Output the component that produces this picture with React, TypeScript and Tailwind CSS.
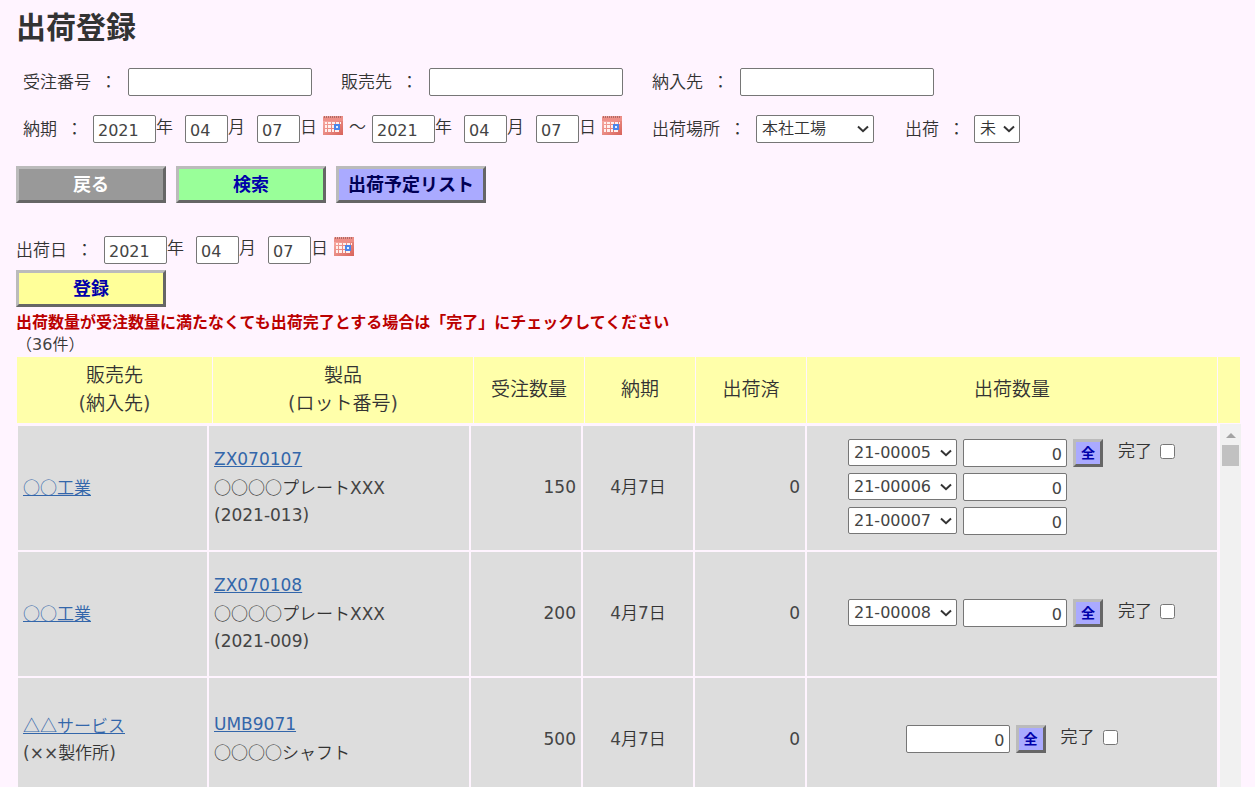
import { useState, type ReactNode } from "react";

type Lot = { no?: string };

const rows: {
  customer: string;
  deliverTo?: string;
  code: string;
  product: string;
  lotNo?: string;
  ordered: number;
  due: string;
  shipped: number;
  lots: Lot[];
}[] = [
  {
    customer: "○○工業",
    code: "ZX070107",
    product: "○○○○プレートXXX",
    lotNo: "(2021-013)",
    ordered: 150,
    due: "4月7日",
    shipped: 0,
    lots: [{ no: "21-00005" }, { no: "21-00006" }, { no: "21-00007" }],
  },
  {
    customer: "○○工業",
    code: "ZX070108",
    product: "○○○○プレートXXX",
    lotNo: "(2021-009)",
    ordered: 200,
    due: "4月7日",
    shipped: 0,
    lots: [{ no: "21-00008" }],
  },
  {
    customer: "△△サービス",
    deliverTo: "(××製作所)",
    code: "UMB9071",
    product: "○○○○シャフト",
    ordered: 500,
    due: "4月7日",
    shipped: 0,
    lots: [{}],
  },
];

const field = "h-7 rounded-[2px] border border-[#767676] bg-white px-1 pt-[3px] text-[16px] font-normal text-[#444]";
const bevel = "border-3 border-t-[#bbb] border-r-[#666] border-b-[#666] border-l-[#bbb] font-bold";
const bigButton = "h-[37px] w-[150px] shrink-0 text-[18px] leading-none";

function CalendarIcon() {
  return (
    <svg width="20" height="19" viewBox="0 0 20 19" shapeRendering="crispEdges">
      <defs>
        <linearGradient id="cal" x1="0" y1="0" x2="1" y2="1">
          <stop offset="0" stopColor="#fbb4ad" />
          <stop offset="1" stopColor="#d8625a" />
        </linearGradient>
      </defs>
      <rect x="0" y="0" width="20" height="19" fill="url(#cal)" />
      <rect x="0" y="1" width="20" height="4" fill="#ee8f88" />
      <path
        d="M1 0h1v2h-1zM3 0h1v2h-1zM5 0h1v2h-1zM7 0h1v2h-1zM9 0h1v2h-1zM11 0h1v2h-1zM13 0h1v2h-1zM15 0h1v2h-1zM17 0h1v2h-1z"
        fill="#b06a66"
      />
      <path
        d="M2 6h2v2h-2zM5 6h3v2h-3zM9 6h3v2h-3zM13 6h3v2h-3zM17 6h1v2h-1zM2 9h2v3h-2zM5 9h3v3h-3zM9 9h2v3h-2zM2 13h2v3h-2zM5 13h3v3h-3zM9 13h2v3h-2zM12 14h4v2h-4z"
        fill="#fff0ee"
      />
      <rect x="11" y="8" width="6" height="6" fill="#4a86ea" />
      <rect x="13" y="10" width="2" height="2" fill="#e4f0ff" />
    </svg>
  );
}

function Label({ htmlFor, className, children }: { htmlFor?: string; className: string; children: ReactNode }) {
  return (
    <label htmlFor={htmlFor} className={`flex shrink-0 items-center gap-[9px] leading-6 ${className}`}>
      <span>{children}</span>
      <span>：</span>
    </label>
  );
}

function Select({ id, label, options, className }: { id?: string; label?: string; options: string[]; className: string }) {
  return (
    <div className="relative">
      <select
        id={id}
        aria-label={label}
        className={`block appearance-none rounded-[2px] border border-[#767676] bg-white pl-[5px] text-[16px] leading-6 ${className}`}
      >
        {options.map((option) => (
          <option key={option}>{option}</option>
        ))}
      </select>
      <svg
        width="12"
        height="8"
        viewBox="0 0 12 8"
        className="pointer-events-none absolute top-1/2 right-[5px] -translate-y-1/2"
      >
        <path d="M1 1.5L6 6.2L11 1.5" fill="none" stroke="#333" strokeWidth="2" />
      </svg>
    </div>
  );
}

// Japanese runs are light, latin runs regular; the placeholder marks
// need the full-width glyphs of the Japanese font
function Text({ text }: { text: string }) {
  return text.split(/([○△]+|[ -~×]+)/).map((part, i) => {
    if (i % 2 === 0) return part;
    return (
      <span key={i} className={/[○△]/.test(part) ? "font-['Noto_Sans_CJK_JP',sans-serif]" : "font-normal text-[#444]"}>
        {part}
      </span>
    );
  });
}

function DateInput({ label }: { label: string }) {
  return (
    <div className="flex items-center leading-6">
      <input aria-label={`${label} 年`} defaultValue="2021" className={`${field} w-[63px]`} />
      <span className="mr-3 mb-1">年</span>
      <input aria-label={`${label} 月`} defaultValue="04" className={`${field} w-[43px]`} />
      <span className="mr-3 mb-1">月</span>
      <input aria-label={`${label} 日`} defaultValue="07" className={`${field} w-[43px]`} />
      <span className="mb-1">日</span>
      <button type="button" aria-label="カレンダー" className="mb-2 ml-[6px]">
        <CalendarIcon />
      </button>
    </div>
  );
}

function ShipCell({ lots, code }: { lots: Lot[]; code: string }) {
  const [done, setDone] = useState(false);

  return (
    <div className="flex items-start justify-center">
      <div className="flex flex-col gap-[6px]">
        {lots.map((lot, i) => (
          <div key={i} className="flex items-start gap-[6px]">
            {lot.no && <Select label={`${code} ロット`} options={[lot.no]} className="h-[27px] w-[109px] font-normal text-[#444]" />}
            <input
              aria-label={`${code} 出荷数量`}
              defaultValue="0"
              className={`${field} w-[104px] text-right`}
            />
          </div>
        ))}
      </div>
      <button type="button" className={`${bevel} ml-[6px] h-7 w-[30px] bg-[#aaaaff] text-[14px] leading-none text-[#0000aa]`}>
        全
      </button>
      <label className="mr-px ml-[15px] flex h-6 items-center gap-2">
        完了
        <input
          type="checkbox"
          checked={done}
          onChange={() => setDone(!done)}
          className="size-[15px]"
        />
      </label>
    </div>
  );
}

export default function App() {
  return (
    <main className="flex h-screen flex-col overflow-hidden bg-[#fff4ff] pr-[14px] pl-4 font-['DejaVu_Sans','Noto_Sans_CJK_JP',sans-serif] text-[17px] leading-[27px] font-[350] text-[#333]">
      <h1 className="pt-2 text-[30px] leading-10 font-bold">出荷登録</h1>

      <form className="mt-5 ml-[7px] grid grid-cols-[318px_311px_1fr] gap-y-[19px]">
        <div className="flex items-center">
          <Label htmlFor="order" className="w-[105px]">受注番号</Label>
          <input id="order" className={`${field} w-[184px]`} />
        </div>
        <div className="flex items-center">
          <Label htmlFor="customer" className="w-[88px]">販売先</Label>
          <input id="customer" className={`${field} w-[194px]`} />
        </div>
        <div className="flex items-center">
          <Label htmlFor="deliver" className="w-[88px]">納入先</Label>
          <input id="deliver" className={`${field} w-[194px]`} />
        </div>
        <div className="col-span-2 flex items-center">
          <Label className="w-[70px]">納期</Label>
          <DateInput label="納期開始" />
          <span className="mx-[6px] mb-1 leading-6">～</span>
          <DateInput label="納期終了" />
        </div>
        <div className="flex items-center">
          <Label htmlFor="place" className="w-[104px]">出荷場所</Label>
          <Select id="place" options={["本社工場"]} className="h-7 w-[118px]" />
          <Label htmlFor="status" className="ml-[31px] w-[69px]">出荷</Label>
          <Select id="status" options={["未", "済"]} className="h-7 w-[46px]" />
        </div>
      </form>

      <div className="mt-[23px] flex gap-[10px]">
        <button type="button" className={`${bevel} ${bigButton} bg-[#999] text-white`}>戻る</button>
        <button type="button" className={`${bevel} ${bigButton} bg-[#99ff99] text-[#0000aa]`}>検索</button>
        <button type="button" className={`${bevel} ${bigButton} bg-[#aaaaff] text-[#000055]`}>出荷予定リスト</button>
      </div>

      <div className="mt-[33px] flex items-center">
        <Label className="w-[88px]">出荷日</Label>
        <DateInput label="出荷日" />
      </div>
      <button type="button" className={`${bevel} ${bigButton} mt-[6px] bg-[#ffff99] text-[#0000aa]`}>登録</button>

      <p className="mt-[5px] text-[16px] leading-[22px] font-bold text-[#bb0000]">
        出荷数量が受注数量に満たなくても出荷完了とする場合は「完了」にチェックしてください
      </p>
      <p className="text-[16px] leading-[22px]"><Text text="（36件）" /></p>

      <table className="w-full shrink-0 table-fixed border-separate border-spacing-px text-[19px] leading-7">
        <thead>
          <tr className="h-[66px] *:bg-[#ffffaa] *:p-0 *:pb-[2px] *:font-[350]">
            <th className="w-[195px]">販売先<br /><Text text="(納入先)" /></th>
            <th className="w-[260px]">製品<br /><Text text="(ロット番号)" /></th>
            <th className="w-[110px]">受注数量</th>
            <th className="w-[110px]">納期</th>
            <th className="w-[110px]">出荷済</th>
            <th>出荷数量</th>
            <th className="w-[22px]"></th>
          </tr>
        </thead>
      </table>

      <div className="flex min-h-0 flex-1 gap-px overflow-hidden">
        <div className="min-w-0 flex-1">
          <table className="w-full table-fixed border-separate border-spacing-[2px]">
            <tbody>
              {rows.map((row) => (
                <tr key={row.code} className="h-[124px] *:bg-[#ddd] *:px-[5px] *:pt-0 *:pb-[2px]">
                  <td className="w-[189px]">
                    <a href="#customer" className="text-[#3366aa] underline"><Text text={row.customer} /></a>
                    {row.deliverTo && <div><Text text={row.deliverTo} /></div>}
                  </td>
                  <td className="w-[260px]">
                    <a href="#product" className="font-normal text-[#3366aa] underline">{row.code}</a>
                    <div><Text text={row.product} /></div>
                    {row.lotNo && <div><Text text={row.lotNo} /></div>}
                  </td>
                  <td className="w-[110px] text-right"><Text text={String(row.ordered)} /></td>
                  <td className="w-[110px] text-center"><Text text={row.due} /></td>
                  <td className="w-[110px] text-right"><Text text={String(row.shipped)} /></td>
                  <td>
                    <ShipCell lots={row.lots} code={row.code} />
                  </td>
                </tr>
              ))}
            </tbody>
          </table>
        </div>
        <div className="flex w-[21px] flex-col items-center bg-[#f1f1f1]">
          <svg width="10" height="21" viewBox="0 0 10 21" className="shrink-0">
            <path d="M0 14L5 9L10 14z" fill="#a3a3a3" />
          </svg>
          <div className="h-[21px] w-[17px] shrink-0 bg-[#c1c1c1]" />
        </div>
      </div>
    </main>
  );
}
